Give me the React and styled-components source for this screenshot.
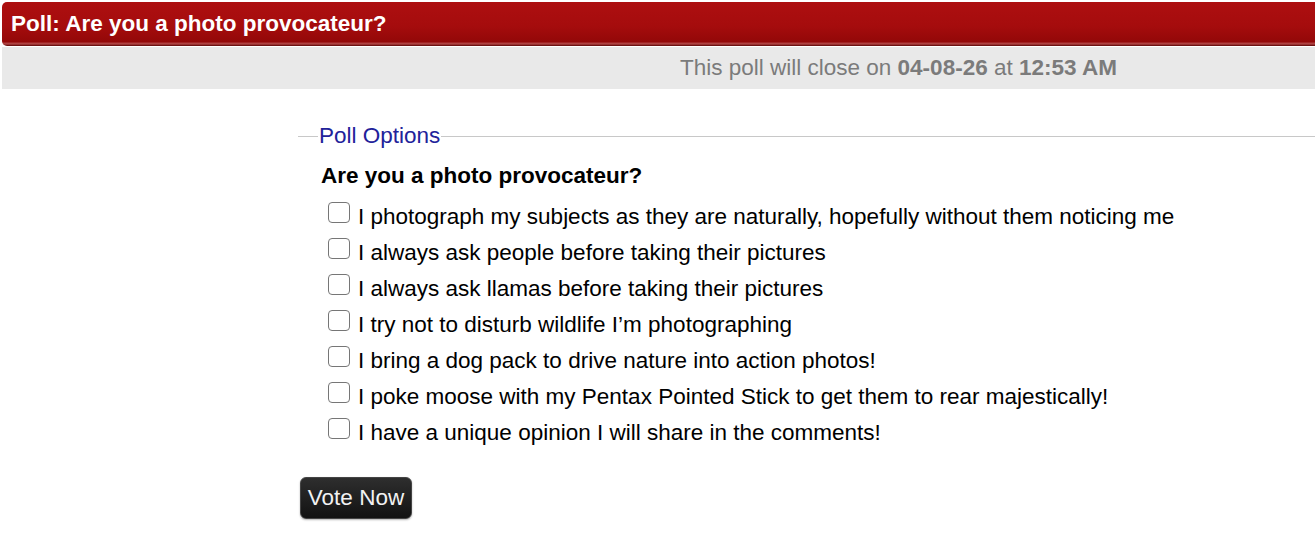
import React from "react";
import styled, { createGlobalStyle } from "styled-components";

const Global = createGlobalStyle`
  html, body { margin: 0; padding: 0; background: #fff; }
  body { font-family: "Liberation Sans", Arial, sans-serif; overflow: hidden; }
`;

const Page = styled.div`
  width: 1315px;
  height: 542px;
  padding: 2px 0 0 2px;
  box-sizing: border-box;
  overflow: hidden;
`;

const Header = styled.div`
  height: 44px;
  width: 1340px;
  box-sizing: border-box;
  background: linear-gradient(to bottom, #ad0f10 0%, #a50c0d 55%, #930808 90%, #b34a4a 95%, #5a0000 100%);
  border-radius: 5px;
  color: #fff;
  font-weight: bold;
  font-size: 22.5px;
  display: flex;
  align-items: center;
  padding-left: 9px;
`;

const CloseBar = styled.div`
  height: 42px;
  margin-top: 1px;
  background: #e9e9e9;
  color: #7b7b7b;
  font-size: 22.5px;
  display: flex;
  align-items: center;
  padding-left: 678px;
  b { font-weight: bold; }
`;

const Body = styled.div`
  padding: 34px 0 0 296px;
`;

const Fieldset = styled.fieldset`
  margin: 0;
  padding: 0 0 0 22px;
  border: none;
  border-top: 1px solid #c8c8c8;
  min-width: 0;
`;

const Legend = styled.legend`
  color: #22229a;
  font-size: 22.5px;
  line-height: 26px;
  padding: 0 1px;
  margin-left: -2px;
`;

const Question = styled.div`
  font-weight: bold;
  font-size: 22.5px;
  line-height: 26px;
  color: #000;
  margin: 14px 0 16px 1px;
`;

const Options = styled.div`
  display: flex;
  flex-direction: column;
  gap: 12px;
  padding-left: 8px;
`;

const Option = styled.label`
  display: flex;
  align-items: center;
  height: 24px;
  font-size: 22.5px;
  color: #000;
  gap: 8px;
`;

const Box = styled.span`
  width: 22px;
  height: 21px;
  border: 1.5px solid #767676;
  border-radius: 4px;
  box-sizing: border-box;
  background: #fff;
  flex: none;
  margin-top: -10px;
`;

const Button = styled.button`
  margin: 32px 0 0 2px;
  width: 112px;
  height: 42px;
  border: 1px solid #444;
  border-radius: 6px;
  background: linear-gradient(to bottom, #2e2e2e, #121212);
  color: #f2f2f2;
  font-family: "Liberation Sans", Arial, sans-serif;
  font-size: 22.5px;
  padding: 0;
  box-shadow: 0 1px 2px rgba(0,0,0,0.3);
`;

const options = [
  "I photograph my subjects as they are naturally, hopefully without them noticing me",
  "I always ask people before taking their pictures",
  "I always ask llamas before taking their pictures",
  "I try not to disturb wildlife I\u2019m photographing",
  "I bring a dog pack to drive nature into action photos!",
  "I poke moose with my Pentax Pointed Stick to get them to rear majestically!",
  "I have a unique opinion I will share in the comments!",
];

export default function App() {
  return (
    <>
      <Global />
      <Page>
        <Header>Poll: Are you a photo provocateur?</Header>
        <CloseBar>
          <span>
            This poll will close on <b>04-08-26</b> at <b>12:53 AM</b>
          </span>
        </CloseBar>
        <Body>
          <Fieldset>
            <Legend>Poll Options</Legend>
            <Question>Are you a photo provocateur?</Question>
            <Options>
              {options.map((o) => (
                <Option key={o}>
                  <Box />
                  {o}
                </Option>
              ))}
            </Options>
          </Fieldset>
          <Button>Vote Now</Button>
        </Body>
      </Page>
    </>
  );
}
